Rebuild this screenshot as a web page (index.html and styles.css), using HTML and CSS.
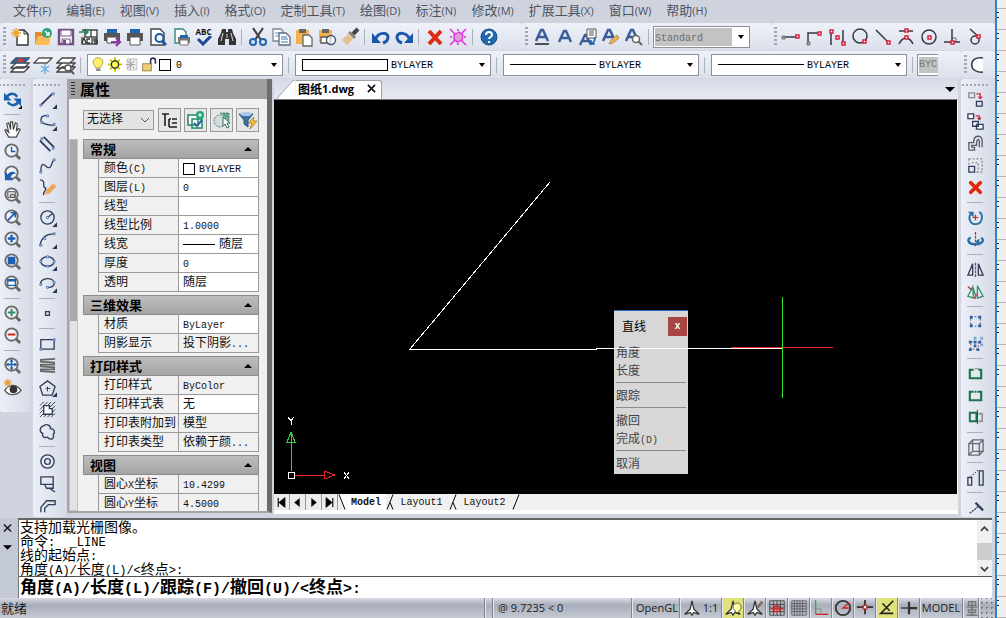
FILE: index.html
```
<!DOCTYPE html>
<html lang="zh-CN">
<head>
<meta charset="utf-8">
<title>图纸1.dwg</title>
<link rel="stylesheet" href="styles.css">
</head>
<body>
<svg class="defs" aria-hidden="true">
  <symbol id="mag" viewBox="0 0 20 20"><path d="M13 13l5 5" stroke="#666" stroke-width="3"/><circle cx="9" cy="9" r="6.5" fill="#eef2f8" stroke="#6b6b6b" stroke-width="2"/></symbol>
  <symbol id="tri" viewBox="0 0 20 20"><path d="M20 16v4h-4z" fill="#111"/></symbol>
  <symbol id="compass" viewBox="0 0 20 20"><path d="M10 2l2 9 6 6-6-2-2 3-2-3-6 2 6-6z" fill="#fff" stroke="#333" stroke-width="1.4"/></symbol>
  <symbol id="layers" viewBox="0 0 20 20"><path d="M6 12h13l-5 5H1zM6 8h13l-5 5H1zM6 3h13l-5 5H1z" fill="#fff" stroke="#444" stroke-width="1.3"/></symbol>
</svg>
<div class="app">
  <nav class="menubar">
    <button>文件<span>(F)</span></button><button>编辑<span>(E)</span></button><button>视图<span>(V)</span></button><button>插入<span>(I)</span></button><button>格式<span>(O)</span></button><button>定制工具<span>(T)</span></button><button>绘图<span>(D)</span></button><button>标注<span>(N)</span></button><button>修改<span>(M)</span></button><button>扩展工具<span>(X)</span></button><button>窗口<span>(W)</span></button><button>帮助<span>(H)</span></button>
  </nav>

  <div class="toolrow">
    <div class="toolbar std">
      <i class="grip"></i>
      <button aria-label="新建"><svg viewBox="0 0 20 20"><path d="M8 3h6l4 4v11H7V9" fill="#fff" stroke="#333" stroke-width="1.4"/><path d="M14 3v4h4" fill="none" stroke="#333"/><path d="M6 1v10M1 6h10M2.500 2.500l7 7M9.500 2.500l-7 7" stroke="#f0a020" stroke-width="1.4"/></svg></button>
      <button aria-label="打开"><svg viewBox="0 0 20 20"><path d="M2 5h6l2 2h6v3H5l-3 8z" fill="#e08a2a"/><path d="M5 9h13l-2 9H2z" fill="#fdbb55"/><circle cx="14" cy="6" r="5" fill="#2ba37c"/><path d="M12 4l4 4M16 5v3h-3" stroke="#fff" stroke-width="1.4" fill="none"/></svg></button>
      <button aria-label="保存"><svg viewBox="0 0 20 20"><path d="M3 3h14v14H3z" fill="#fff" stroke="#755087" stroke-width="2.4"/><path d="M5 3h10v6H5zM6 12h8v5H6z" fill="#fff" stroke="#755087"/><path d="M7 13h3v4H7z" fill="#755087"/></svg></button>
      <button aria-label="ACIS"><svg viewBox="0 0 20 20"><path d="M3 3h15v7H6V2M12 3v7M3 10v7h15v-7" fill="#fff" stroke="#444" stroke-width="1.4"/><path d="M0 5h9M6 2l3 3-3 3" fill="none" stroke="#1c8a5c" stroke-width="1.6"/><path d="M3 16l2-5 2 5M11 12H8v4h3M13 11v6M18 12h-3v2h3v2h-3" fill="none" stroke="#333" stroke-width="1.3"/></svg></button>
      <button aria-label="批量打印"><svg viewBox="0 0 20 20"><path d="M5 2h10v4H5z" fill="#1e66ad"/><path d="M2 6h16v8H2z" fill="#555"/><path d="M5 10h10v6H5z" fill="#fff" stroke="#555"/><path d="M9 15h8M14 11l4 4-4 4" stroke="#8d3aa0" stroke-width="2.2" fill="none"/></svg></button>
      <button aria-label="打印"><svg viewBox="0 0 20 20"><path d="M5 2h10v4H5z" fill="#1e66ad"/><path d="M2 6h16v8H2z" fill="#555"/><path d="M5 10h10v8H5z" fill="#fff" stroke="#555"/></svg></button>
      <button aria-label="预览"><svg viewBox="0 0 20 20"><path d="M3 2h9l4 4v12H3z" fill="#fff" stroke="#444" stroke-width="1.4"/><path d="M14 14l4 4" stroke="#1c57a0" stroke-width="3"/><circle cx="11.500" cy="11" r="4" fill="#eaf3ff" stroke="#1c57a0" stroke-width="2"/></svg></button>
      <button aria-label="发布"><svg viewBox="0 0 20 20"><path d="M4 2h8l3 3v11H4z" fill="#fff" stroke="#3b8775" stroke-width="1.4"/><path d="M7 10h12v6H7z" fill="#777"/><path d="M9 8h8v3H9z" fill="#1e66ad"/><path d="M9 13h8v5H9z" fill="#fff" stroke="#777"/></svg></button>
      <button aria-label="拼写检查" class="abc"><span>ABC</span><svg viewBox="0 0 20 10"><path d="M4 3l5 5 8-8" fill="none" stroke="#1b4898" stroke-width="3"/></svg></button>
      <button aria-label="查找"><svg viewBox="0 0 20 20"><path d="M5 2h4v3h2V2h4l1 4 3 6v6h-7v-6H8v6H1v-6l3-6z" fill="#333"/><path d="M6 6l-2 8M14 6l2 8M10 7v4" stroke="#ddd"/></svg></button>
      <i class="sep"></i>
      <button aria-label="剪切"><svg viewBox="0 0 20 20"><path d="M5 1l8 12M15 1L7 13" stroke="#444" stroke-width="2.200"/><circle cx="5" cy="15" r="3" fill="none" stroke="#1e66ad" stroke-width="2"/><circle cx="15" cy="15" r="3" fill="none" stroke="#1e66ad" stroke-width="2"/></svg></button>
      <button aria-label="复制"><svg viewBox="0 0 20 20"><path d="M2 2h8l2 2v10H2z" fill="#fff" stroke="#7a8793" stroke-width="1.300"/><path d="M4 6h5M4 9h5" stroke="#5a92c6"/><path d="M8 6h7l4 4v8H8z" fill="#fff" stroke="#5b6b7a" stroke-width="1.300"/><path d="M10 10h6M10 12h7M10 15h7" stroke="#3879b8"/></svg></button>
      <button aria-label="粘贴"><svg viewBox="0 0 20 20"><path d="M2 3h13v14H2z" fill="#f5b24c"/><path d="M5 2h7v4H5z" fill="#666"/><path d="M9 8h6l3 3v8H9z" fill="#fff" stroke="#666" stroke-width="1.300"/></svg></button>
      <button aria-label="粘贴为块"><svg viewBox="0 0 20 20"><path d="M2 3h13v12H2z" fill="#f5b24c"/><path d="M5 2h7v4H5z" fill="#666"/><path d="M4 10h9v6H4z" fill="#fff" stroke="#555" stroke-width="1.300"/><circle cx="14" cy="13" r="4.500" fill="#fff" fill-opacity=".7" stroke="#3b4d78" stroke-width="1.300"/></svg></button>
      <button aria-label="格式刷"><svg viewBox="0 0 20 20"><path d="M2 13l6-6 5 5-6 6z" fill="#e5c08a"/><path d="M8 6l6 6 2-2-6-6z" fill="#8b8175"/><path d="M13 7l5-5" stroke="#444" stroke-width="4"/></svg></button>
      <i class="sep"></i>
      <button aria-label="撤销"><svg viewBox="0 0 20 20"><path d="M5 11c3-6 12-6 12-1 0 3-2 5-5 6" fill="none" stroke="#1b57a8" stroke-width="3"/><path d="M1 6v10h9z" fill="#1b57a8"/></svg></button>
      <button aria-label="重做"><svg viewBox="0 0 20 20"><path d="M15 11C12 5 3 5 3 10c0 3 2 5 5 6" fill="none" stroke="#1b57a8" stroke-width="3"/><path d="M19 6v10h-9z" fill="#1b57a8"/></svg></button>
      <i class="sep"></i>
      <button aria-label="删除"><svg viewBox="0 0 20 20"><path d="M4 4l12 13M16 4L4 17" stroke="#dc2b12" stroke-width="4"/></svg></button>
      <button aria-label="清理"><svg viewBox="0 0 20 20"><path d="M6 8l5-3 4 3-1 5-5 2-3-3z" fill="#d8a0d5" stroke="#e82adf" stroke-width="1.300"/><path d="M2 2l5 5M18 2l-5 5M2 18l5-5M18 18l-5-5M10 2v2M10 16v2M2 10h2M16 10h2" stroke="#e82adf" stroke-width="1.500"/></svg></button>
      <i class="sep"></i>
      <button aria-label="帮助"><svg viewBox="0 0 20 20"><circle cx="10" cy="10" r="8" fill="#2469ad" stroke="#17508c"/><path d="M7 8c0-4 6-4 6 0 0 2-3 2-3 4M10 14v2" fill="none" stroke="#fff" stroke-width="2"/></svg></button>
    </div>
    <div class="toolbar text">
      <i class="grip"></i>
      <button aria-label="多行文字"><svg viewBox="0 0 20 20"><path d="M4 14L9 3h2l5 11M6 10h8" fill="none" stroke="#3c5c99" stroke-width="2.500"/><path d="M3 17h14" stroke="#111" stroke-width="1.400"/></svg></button>
      <button aria-label="文字"><svg viewBox="0 0 20 20"><path d="M4 15L9 4h2l5 11M6 11h8" fill="none" stroke="#3c5c99" stroke-width="2.500"/></svg></button>
      <button aria-label="文字样式"><svg viewBox="0 0 20 20"><path d="M2 18L7 8h1l5 10M4 14h7" fill="none" stroke="#3c5c99" stroke-width="2.300"/><path d="M9 2h9v9H9z" fill="#fff" stroke="#555"/><path d="M11 4h5M11 6h5M11 8h5" stroke="#555"/><path d="M17 10c0 4-1 5-4 7M13 13v4h4" fill="none" stroke="#1e66ad" stroke-width="1.600"/></svg></button>
      <button aria-label="编辑文字"><svg viewBox="0 0 20 20"><path d="M2 14L7 3h2l5 11M4 10h8" fill="none" stroke="#3c5c99" stroke-width="2.500"/><path d="M8 17l2-4 6-5 2 3-6 5z" fill="#efb35d" stroke="#b98b4c"/></svg></button>
      <button aria-label="查找文字"><svg viewBox="0 0 20 20"><path d="M2 14L7 3h2l5 11M4 10h8" fill="none" stroke="#3c5c99" stroke-width="2.500"/><path d="M14 14l4 4" stroke="#666" stroke-width="2"/><circle cx="12" cy="12" r="3.500" fill="#fff" stroke="#666" stroke-width="1.500"/></svg></button>
      <i class="sep"></i>
      <label class="combo style"><select aria-label="文字样式名"><option>Standard</option></select><svg class="arrow" viewBox="0 0 6 4"><path d="M0 0h6L3 4z"/></svg></label>
    </div>
    <div class="toolbar snap">
      <i class="grip"></i>
      <button aria-label="临时追踪"><svg class="ln" viewBox="0 0 20 20"><path d="M3 10h13"/><path class="g" d="M1 9h3v3H1z"/><path class="r" d="M15 8h3v3h-3z"/></svg></button>
      <button aria-label="捕捉自"><svg class="ln" viewBox="0 0 20 20"><path d="M4 15V6h10"/><path class="g" d="M3 15h3v3H3z"/><path class="r" d="M14 5h3v3h-3z"/></svg></button>
      <button aria-label="中点"><svg class="ln" viewBox="0 0 20 20"><path d="M4 5v13M16 3v13"/><path class="r" d="M3 3h3v3H3zM9 9h3v3H9zM15 15h3v3h-3z"/></svg></button>
      <button aria-label="象限点"><svg class="ln" viewBox="0 0 20 20"><circle cx="10" cy="9" r="7"/><path class="r" d="M13 13h3v3h-3z"/></svg></button>
      <button aria-label="端点"><svg class="ln" viewBox="0 0 20 20"><path d="M3 3l12 12"/><path class="r" d="M14 14h3v3h-3z"/></svg></button>
      <button aria-label="交点"><svg class="ln" viewBox="0 0 20 20"><path d="M3 4h14M3 17c4-8 10-8 14 0"/><path class="r" d="M9 2h3v3H9zM9 9h3v3H9z"/></svg></button>
      <button aria-label="圆心"><svg class="ln" viewBox="0 0 20 20"><circle cx="10" cy="10" r="7"/><path class="r" d="M9 9h3v3H9z"/></svg></button>
      <button aria-label="垂足"><svg class="ln" viewBox="0 0 20 20"><path d="M10 2v13M2 15h16"/><path d="M10 11h4v4" stroke-width=".7"/><path class="r" d="M9 14h3v3H9z"/></svg></button>
      <button aria-label="切点"><svg class="ln" viewBox="0 0 20 20"><circle cx="10" cy="13" r="4"/><path d="M5 2l9 8"/><path class="r" d="M12 8h3v3h-3z"/></svg></button>
    </div>
  </div>

  <div class="toolrow">
    <div class="toolbar props">
      <i class="grip"></i>
      <button aria-label="图层"><svg viewBox="0 0 20 20"><use href="#layers"/><path d="M6 3h13l-5 5H1z" fill="#34618d"/><path d="M8 4h5v3H8z" fill="#dc3535"/></svg></button>
      <button aria-label="冻结图层"><svg viewBox="0 0 20 20"><path d="M6 3h13l-5 5H1z" fill="#fff" stroke="#555" stroke-width="1.300"/><path d="M12 9v10M8 11l8 6M16 11l-8 6" stroke="#6db1ea" stroke-width="1.500"/></svg></button>
      <button aria-label="图层浏览"><svg viewBox="0 0 20 20"><use href="#layers"/><path d="M14 15l4 4" stroke="#555" stroke-width="2"/><circle cx="12" cy="13" r="3" fill="#fff" stroke="#555" stroke-width="1.500"/></svg></button>
      <i class="sep"></i>
      <label class="combo layer">
        <svg viewBox="0 0 20 20"><path d="M7 14c0-3-4-4-3-8 1-6 11-6 12 0 1 4-3 5-3 8z" fill="#fff26a" stroke="#a69429"/><path d="M7 15h6v3H8z" fill="#888"/></svg>
        <svg viewBox="0 0 20 20"><path d="M10 1v18M1 10h18M4 4l12 12M16 4L4 16" stroke="#c9c900" stroke-width="2.500"/><circle cx="10" cy="10" r="4.500" fill="#ff5" stroke="#222" stroke-width="1.500"/></svg>
        <svg viewBox="0 0 20 20"><path d="M4 3h12v14H4z" fill="#eee" stroke="#bbb"/><path d="M8 3v14M2 10h12M4 5l9 10M13 5L4 15" stroke="#aaa" stroke-width="1.300"/></svg>
        <svg viewBox="0 0 20 20"><path d="M2 9h11v9H2z" fill="#eccb77" stroke="#8c7439"/><path d="M12 9V5c0-4 6-4 6 0v4" fill="none" stroke="#2c3161" stroke-width="2"/></svg>
        <i class="swatch"></i>
        <select aria-label="当前图层"><option>0</option></select><svg class="arrow" viewBox="0 0 6 4"><path d="M0 0h6L3 4z"/></svg>
      </label>
      <i class="sep"></i>
      <label class="combo"><i class="colorbar"></i><select aria-label="颜色"><option>BYLAYER</option></select><svg class="arrow" viewBox="0 0 6 4"><path d="M0 0h6L3 4z"/></svg></label>
      <i class="sep"></i>
      <label class="combo"><i class="rule"></i><select aria-label="线型"><option>BYLAYER</option></select><svg class="arrow" viewBox="0 0 6 4"><path d="M0 0h6L3 4z"/></svg></label>
      <i class="sep"></i>
      <label class="combo"><i class="rule"></i><select aria-label="线宽"><option>BYLAYER</option></select><svg class="arrow" viewBox="0 0 6 4"><path d="M0 0h6L3 4z"/></svg></label>
      <i class="sep"></i>
      <span class="clipcombo"><span>BYC</span></span>
    </div>
    <div class="toolbar arcbar"><i class="grip"></i><button aria-label="圆弧"><svg class="ln" viewBox="0 0 20 20"><path d="M14 3C-1 0-1 19 14 17" fill="#fff"/></svg></button></div>
  </div>

  <main class="work">
    <div class="vbar view">
      <i class="hgrip"></i>
      <button aria-label="重生成"><svg viewBox="0 0 20 20"><path d="M15 7C11 2 5 4 4 8M5 13c4 5 10 3 11-1" fill="none" stroke="#1b5fae" stroke-width="2.600"/><path d="M1 3v8h8zM19 17V9h-8z" fill="#1b5fae"/><use href="#tri"/></svg></button>
      <i class="hsep"></i>
      <button aria-label="平移"><svg viewBox="0 0 20 20"><path d="M6 18l-4-7 1-1 3 3-2-9 2-1 2 7V2h2l1 8 2-7 2 1-1 8 2-3 2 1-4 8z" fill="#fff" stroke="#444" stroke-width="1.200"/></svg></button>
      <button aria-label="实时缩放"><svg viewBox="0 0 20 20"><use href="#mag"/><path d="M9 5v5h4" fill="none" stroke="#1b5fae" stroke-width="1.500"/></svg></button>
      <button aria-label="上一视图"><svg viewBox="0 0 20 20"><use href="#mag"/><path d="M2 8v9h9l-3-3c1-3 3-4 6-4-3-3-7-2-9 1z" fill="#1b5fae"/></svg></button>
      <button aria-label="窗口缩放"><svg viewBox="0 0 20 20"><use href="#mag"/><path d="M5 6h8v6H5zM8 9h4v3H8z" fill="#ddd" stroke="#555"/></svg></button>
      <button aria-label="动态缩放"><svg viewBox="0 0 20 20"><use href="#mag"/><path d="M5 13l7-7M8 5h5v5" fill="none" stroke="#1b5fae" stroke-width="1.800"/></svg></button>
      <button aria-label="中心缩放"><svg viewBox="0 0 20 20"><use href="#mag"/><path d="M9 5v8M5 9h8" stroke="#1b5fae" stroke-width="2.500"/></svg></button>
      <button aria-label="对象缩放"><svg viewBox="0 0 20 20"><use href="#mag"/><path d="M5 5h8v8H5z" fill="#1b5fae"/></svg></button>
      <button aria-label="全部缩放"><svg viewBox="0 0 20 20"><use href="#mag"/><path d="M5 6h8v6H5z" fill="#fff" stroke="#1b5fae" stroke-width="1.300"/><path d="M5 6h8v2H5z" fill="#1b5fae"/></svg></button>
      <i class="hsep"></i>
      <button aria-label="放大"><svg viewBox="0 0 20 20"><use href="#mag"/><path d="M9 5v8M5 9h8" stroke="#2c9366" stroke-width="2"/></svg></button>
      <button aria-label="缩小"><svg viewBox="0 0 20 20"><use href="#mag"/><path d="M5 9h8" stroke="#d02a1c" stroke-width="2"/></svg></button>
      <i class="hsep"></i>
      <button aria-label="范围缩放"><svg viewBox="0 0 20 20"><use href="#mag"/><path d="M9 4v10M4 9h10" stroke="#1b5fae" stroke-width="1.500"/><path d="M9 3l2 3H7zM9 15l2-3H7zM3 9l3-2v4zM15 9l-3-2v4z" fill="#1b5fae"/></svg></button>
      <button aria-label="视图可见"><svg viewBox="0 0 20 20"><path d="M2 13c4-7 12-7 17 0-5 6-13 6-17 0z" fill="#fff" stroke="#555" stroke-width="1.500"/><circle cx="11" cy="12" r="4" fill="#333"/><path d="M5 1v9M1 5h8M2 2l6 6M8 2L2 8" stroke="#eea034" stroke-width="1.400"/></svg></button>
    </div>
    <div class="vbar draw">
      <i class="hgrip"></i>
      <button aria-label="直线"><svg class="dr" viewBox="0 0 20 20"><path d="M3 16L15 4" stroke-width="1.800"/><path class="n" d="M2 15h2v2H2zM15 3h2v2h-2z"/><use href="#tri"/></svg></button>
      <button aria-label="多段线"><svg class="dr" viewBox="0 0 20 20"><path d="M9 4C3 3 1 10 6 12c4 2 6 2 11 2"/><path class="n" d="M9 3h2v2H9zM3 10h2v2H3zM16 12h2v2h-2z"/><use href="#tri"/></svg></button>
      <button aria-label="双线"><svg class="dr" viewBox="0 0 20 20"><path d="M2 7l11 11M6 3l11 11" stroke-width="2"/><path class="n" d="M3 4h2v2H3zM15 14h2v2h-2z"/></svg></button>
      <button aria-label="样条"><svg class="dr" viewBox="0 0 20 20"><path d="M3 17C3 4 7 10 10 12c5 2 4-7 7-8"/><path class="n" d="M2 16h2v2H2zM16 3h2v2h-2z"/></svg></button>
      <button aria-label="徒手画"><svg class="dr" viewBox="0 0 20 20"><path d="M2 2c7 0 2 7 5 8 4 1-3 6-1 8"/><path d="M8 17l1-4 7-7 3 3-7 7z" fill="#eba757" stroke="#eeb36b" stroke-width="1"/></svg></button>
      <i class="hsep"></i>
      <button aria-label="圆"><svg class="dr" viewBox="0 0 20 20"><circle cx="10" cy="10" r="7"/><path d="M10 10l5-4"/><path class="n" d="M9 9h2v2H9z"/><use href="#tri"/></svg></button>
      <button aria-label="圆弧"><svg class="dr" viewBox="0 0 20 20"><path d="M2 17C3 9 8 4 17 4"/><path class="n" d="M2 15h2v2H2zM6 8h2v2H6zM16 3h2v2h-2z"/><use href="#tri"/></svg></button>
      <button aria-label="椭圆"><svg class="dr" viewBox="0 0 20 20"><ellipse cx="10" cy="10" rx="7" ry="5"/><path class="n" d="M9 4h2v2H9zM2 9h2v2H2zM16 9h2v2h-2zM9 14h2v2H9z"/><use href="#tri"/></svg></button>
      <button aria-label="椭圆弧"><svg class="dr" viewBox="0 0 20 20"><path d="M3 11C1 3 18 3 17 10c0 3-2 4-6 4"/><path class="n" d="M2 10h2v2H2zM16 8h2v2h-2zM9 13h2v2H9z"/><use href="#tri"/></svg></button>
      <i class="hsep"></i>
      <button aria-label="点"><svg class="dr" viewBox="0 0 20 20"><path d="M8 8h4v4H8z"/></svg></button>
      <i class="hsep"></i>
      <button aria-label="矩形"><svg class="dr" viewBox="0 0 20 20"><path d="M3 6h14v10H3z"/><path class="n" d="M2 15h2v2H2zM16 5h2v2h-2z"/></svg></button>
      <button aria-label="螺旋"><svg class="dr" viewBox="0 0 20 20"><path d="M18 3L3 4v2l14 1v2L3 9v2l14 1v2L3 14v2l15 1" stroke="#666" stroke-width="1.800"/></svg></button>
      <button aria-label="多边形"><svg class="dr" viewBox="0 0 20 20"><path d="M10 3l8 6-3 9H5L2 9z"/><path d="M10 9v5M8 11h5" stroke-width="1"/><use href="#tri"/></svg></button>
      <button aria-label="图案填充"><svg class="dr" viewBox="0 0 20 20"><path d="M2 6l4-4M2 10l8-8M2 14l12-12M2 18L18 2M6 18L18 6M10 18l8-8M14 18l4-4" stroke-width="1"/><path d="M6 6h6v3h3v6H6z" fill="#fff"/></svg></button>
      <button aria-label="修订云线"><svg class="dr" viewBox="0 0 20 20"><path d="M6 4c3-3 8 0 7 3 5 0 5 5 3 6 2 6-4 6-6 3-4 1-6-1-5-4-5-2-2-8 1-8z"/></svg></button>
      <i class="hsep"></i>
      <button aria-label="圆环"><svg class="dr" viewBox="0 0 20 20"><circle cx="10" cy="10" r="7"/><circle cx="10" cy="10" r="3"/></svg></button>
      <button aria-label="区域覆盖"><svg class="dr" viewBox="0 0 20 20"><path d="M3 3h13v8H3zM7 11l2 4h7v-4M12 15l6 4"/></svg></button>
      <button aria-label="多线"><svg class="dr" viewBox="0 0 20 20"><path d="M3 17v-5l6-7h9v4h-7l-4 4v4"/></svg></button>
    </div>

    <aside class="panel">
      <h2><i></i>属性</h2>
      <div class="pick">
        <label class="psel"><select aria-label="选择对象"><option>无选择</option></select><svg viewBox="0 0 10 6"><path d="M1 1l4 4 4-4" fill="none" stroke="#555"/></svg></label>
        <button aria-label="分类"><svg viewBox="0 0 20 20"><path d="M2 4h7M5 4v12M9 9v8M9 9h2M12 9h5M12 13h5M9 17h8" fill="none" stroke="#222" stroke-width="1.600"/></svg></button>
        <button aria-label="加选"><svg viewBox="0 0 20 20"><path d="M2 5h10v10H2zM6 9h10v9H6z" fill="#fff" stroke="#1c8a5c" stroke-width="1.500"/><path d="M8 13l3 3 5-6" fill="none" stroke="#2b66a2" stroke-width="2"/><circle cx="14" cy="5" r="4" fill="#26a276"/><path d="M14 3v4M12 5h4" stroke="#fff"/></svg></button>
        <button aria-label="快速选择"><svg viewBox="0 0 20 20"><circle cx="8" cy="11" r="6" fill="#d5dadd" stroke="#507080" stroke-dasharray="2 1"/><path d="M8 3h9v8" fill="#65a889" stroke="#3d8a69" stroke-dasharray="2 1"/><path d="M11 7v9l2-2 2 4 2-1-2-4h3z" fill="#fff" stroke="#2d6e58"/></svg></button>
        <button aria-label="筛选"><svg viewBox="0 0 20 20"><path d="M1 4h14l-5 6v7l-4-3v-4z" fill="#3972a4" stroke="#285376"/><ellipse cx="8" cy="4" rx="6" ry="2" fill="#a9c9e2"/><path d="M16 7l-6 6h4l-2 6 7-8h-4z" fill="#ffc23c" stroke="#9a6f25" stroke-width=".700"/></svg></button>
      </div>
      <div class="scroll">
        <div class="track"><i></i></div>
        <div class="groups">
          <section><h3>常规<svg viewBox="0 0 8 4"><path d="M0 4h8L4 0z"/></svg></h3>
            <table>
              <tr><th>颜色<b>(C)</b></th><td><i class="swatch"></i><b>BYLAYER</b></td></tr>
              <tr><th>图层<b>(L)</b></th><td><b>0</b></td></tr>
              <tr><th>线型</th><td></td></tr>
              <tr><th>线型比例</th><td><b>1.0000</b></td></tr>
              <tr><th>线宽</th><td><i class="short"></i>随层</td></tr>
              <tr><th>厚度</th><td><b>0</b></td></tr>
              <tr><th>透明</th><td>随层</td></tr>
            </table></section>
          <section><h3>三维效果<svg viewBox="0 0 8 4"><path d="M0 4h8L4 0z"/></svg></h3>
            <table>
              <tr><th>材质</th><td><b>ByLayer</b></td></tr>
              <tr><th>阴影显示</th><td class="ro">投下阴影<b>...</b></td></tr>
            </table></section>
          <section><h3>打印样式<svg viewBox="0 0 8 4"><path d="M0 4h8L4 0z"/></svg></h3>
            <table>
              <tr><th>打印样式</th><td class="ro"><b>ByColor</b></td></tr>
              <tr><th>打印样式表</th><td>无</td></tr>
              <tr><th>打印表附加到</th><td class="ro">模型</td></tr>
              <tr><th>打印表类型</th><td class="ro">依赖于颜<b>...</b></td></tr>
            </table></section>
          <section><h3>视图<svg viewBox="0 0 8 4"><path d="M0 4h8L4 0z"/></svg></h3>
            <table>
              <tr><th>圆心<b>X</b>坐标</th><td class="ro"><b>10.4299</b></td></tr>
              <tr><th>圆心<b>Y</b>坐标</th><td class="ro"><b>4.5000</b></td></tr>
            </table></section>
        </div>
      </div>
    </aside>

    <section class="doc">
      <div class="tabs">
        <svg class="slope" viewBox="0 0 20 20"><path d="M0 20L16 2q2-2 4-2v20z" fill="#fff"/><path d="M0 20L16 2q2-2 4-2" fill="none" stroke="#9aa0ac"/></svg>
        <div class="tab">图纸<span>1.dwg</span><button aria-label="关闭"><svg viewBox="0 0 10 10"><path d="M1 1l8 8M9 1L1 9" stroke="#111" stroke-width="1.800"/></svg></button></div>
        <button class="more" aria-label="文档列表"><svg viewBox="0 0 10 5"><path d="M0 0h10L5 5z"/></svg></button>
      </div>
      <div class="canvas">
        <div class="popup">
          <header><span>直线</span><button aria-label="关闭菜单">x</button></header>
          <button>角度</button><button>长度</button><hr>
          <button>跟踪</button><hr>
          <button>撤回</button><button>完成<b>(D)</b></button><hr>
          <button>取消</button>
        </div>
        <svg class="drawing" shape-rendering="crispEdges">
          <path d="M276 82L136 249H322V248H508" fill="none" stroke="#fff"/>
          <path d="M457 247H559" stroke="#f02020"/><path d="M508 197V298" stroke="#2fe02f"/>
          <path d="M17 371V332M13 342h8l-4-10z" fill="none" stroke="#38d038"/>
          <path d="M21 375H50M50 371v8l11-4z" fill="none" stroke="#f02020"/>
          <path d="M14 372h6v6h-6zM14 317l3 4 3-4M17 321v4M70 372l5 7M75 372l-5 7" fill="none" stroke="#fff"/>
        </svg>
      </div>
      <div class="sheets">
        <button class="nav" aria-label="首页"><svg viewBox="0 0 10 10"><path d="M2 1v8M8 1v8L3 5z" stroke="#000"/></svg></button>
        <button class="nav" aria-label="上页"><svg viewBox="0 0 10 10"><path d="M7 1v8L2 5z"/></svg></button>
        <button class="nav" aria-label="下页"><svg viewBox="0 0 10 10"><path d="M3 1v8l5-4z"/></svg></button>
        <button class="nav" aria-label="末页"><svg viewBox="0 0 10 10"><path d="M8 1v8M2 1v8l5-4z" stroke="#000"/></svg></button>
        <svg class="edge" viewBox="0 0 8 15"><path d="M0 0h8v15H6z" fill="#fff"/><path d="M1 0l6 15" stroke="#000"/></svg>
        <button class="sheet on">Model</button>
        <svg class="edge" viewBox="0 0 8 15"><path d="M1 15L7 0M4 8l3 7" stroke="#000"/></svg>
        <button class="sheet">Layout1</button>
        <svg class="edge" viewBox="0 0 8 15"><path d="M1 15L7 0M4 8l3 7" stroke="#000"/></svg>
        <button class="sheet">Layout2</button>
        <svg class="edge" viewBox="0 0 8 15"><path d="M1 15L7 0" stroke="#000"/></svg>
      </div>
    </section>

    <div class="vbar modify">
      <i class="hgrip"></i>
      <button aria-label="复制对象"><svg class="dr" viewBox="0 0 20 20"><path d="M3 3h6v5H3z" stroke="#889"/><path d="M11 12h6v5h-6z"/><path d="M11 4h4v5M13 7l2 2 2-2" stroke="#c8283c" stroke-width="1.300"/></svg></button>
      <button aria-label="多重复制"><svg class="dr" viewBox="0 0 20 20"><path d="M2 2h6v5H2zM7 10h6v5H7zM11 13h7v5h-7z" fill="#fff"/><path d="M10 4h4v4M12 6l2 2 2-2" stroke="#c8283c" stroke-width="1.300"/></svg></button>
      <button aria-label="偏移"><svg class="dr" viewBox="0 0 20 20"><path d="M3 17V9h5C8 0 17 1 17 7v7M6 14v-2h5c0-8 3-7 3-4v6M3 17h6v-3H6" stroke="#555c66"/></svg></button>
      <button aria-label="缩放"><svg class="dr" viewBox="0 0 20 20"><path d="M3 3h14v14M3 3v6M6 7h7v10M17 17h-7" stroke="#888" stroke-dasharray="2 2"/><path d="M3 11h6v6H3z"/></svg></button>
      <button aria-label="删除对象"><svg viewBox="0 0 20 20"><path d="M5 5l10 10M15 5L5 15" stroke="#e2280f" stroke-width="4" stroke-linecap="round"/></svg></button>
      <i class="hsep"></i>
      <button aria-label="旋转"><svg viewBox="0 0 20 20"><path d="M14 4c5 4 3 13-4 13-6 0-8-7-5-11" fill="none" stroke="#2871a8" stroke-width="2"/><path d="M2 4h6v6z" fill="#2871a8"/><path d="M10 7v6M7 10h6" stroke="#d32323" stroke-width="1.300"/></svg></button>
      <button aria-label="三维旋转"><svg viewBox="0 0 20 20"><path d="M5 8c-5 2-2 7 4 7 8 0 11-4 7-7" fill="none" stroke="#2871a8" stroke-width="2.500"/><path d="M10 12l4-3v8z" fill="#2871a8"/><path d="M10 2v16" stroke="#d32323" stroke-width="1.300" stroke-dasharray="3 1"/></svg></button>
      <i class="hsep"></i>
      <button aria-label="镜像"><svg class="dr" viewBox="0 0 20 20"><path d="M7 4v12H2zM13 4v12h5z"/><path d="M10 3v15" stroke="#d32323" stroke-dasharray="3 1"/></svg></button>
      <button aria-label="三维镜像"><svg class="dr" viewBox="0 0 20 20"><path d="M7 5L2 15l6 2zM12 4l6 11-6 2zM12 4v13M7 5l3 9" stroke="#35946a"/><path d="M2 5l4 3M9 18l2-5" stroke="#d32323"/></svg></button>
      <i class="hsep"></i>
      <button aria-label="阵列"><svg viewBox="0 0 20 20"><path d="M5 5h10v10H5z" fill="none" stroke="#555" stroke-dasharray="2 2"/><path d="M4 4h3v3H4zM13 4h3v3h-3zM4 13h3v3H4zM13 13h3v3h-3z" fill="#2462ad"/></svg></button>
      <button aria-label="三维阵列"><svg viewBox="0 0 20 20"><path d="M8 3h3v3H8zM15 3h3v3h-3zM15 10h3v3h-3z" fill="#80a9da"/><path d="M5 8h8v8H5z" fill="none" stroke="#a44" stroke-dasharray="2 2"/><path d="M3 7h3v3H3zM8 7h3v3H8zM13 7h3v3h-3zM3 15h3v3H3zM11 15h3v3h-3zM8 11h3v3H8z" fill="#2462ad"/></svg></button>
      <i class="hsep"></i>
      <button aria-label="打断"><svg viewBox="0 0 20 20"><path d="M8 6H4v9h12V6h-3" fill="none" stroke="#16754b" stroke-width="2.200"/><path d="M9 5h5" stroke="#888"/></svg></button>
      <button aria-label="打断于点"><svg viewBox="0 0 20 20"><path d="M8 6H4v9h12V6h-4M9 6h2" fill="none" stroke="#16754b" stroke-width="2.200"/></svg></button>
      <button aria-label="修剪"><svg viewBox="0 0 20 20"><path d="M11 5H4v9h7z" fill="none" stroke="#16754b" stroke-width="2"/><path d="M13 6h4v8h-4" fill="none" stroke="#999" stroke-width="2"/><path d="M12 2v15" stroke="#333"/></svg></button>
      <i class="hsep"></i>
      <button aria-label="长方体"><svg class="dr" viewBox="0 0 20 20"><path d="M3 6h11v12H3zM7 2h11v12H7zM3 6l4-4M14 6l4-4M14 18l4-4M3 18l4-4" stroke="#666b74"/></svg></button>
      <i class="hsep"></i>
      <button aria-label="拉长"><svg class="dr" viewBox="0 0 20 20"><path d="M2 10h4v8H2zM14 3h4v15h-4z"/><path d="M5 9l8-7" stroke-dasharray="1 2"/></svg></button>
      <i class="hsep"></i>
      <button aria-label="延伸"><svg class="dr" viewBox="0 0 20 20"><path d="M10 5l8 8" stroke-width="2.400"/><path d="M4 16l9-7" stroke-dasharray="2 1"/></svg></button>
    </div>
  </main>

  <section class="command">
    <div class="cmdside"><button aria-label="关闭命令行"><svg viewBox="0 0 10 10"><path d="M1 1l8 8M9 1L1 9" stroke="#111" stroke-width="1.600"/></svg></button><button aria-label="命令行菜单"><svg viewBox="0 0 10 10"><path d="M0 3h10L5 8z"/></svg></button></div>
    <div class="cmdbody">
      <div class="log">
        <div class="lines"><p>支持加载光栅图像。</p><p>命令<b>:&nbsp; _LINE</b></p><p>线的起始点<b>:</b></p><p>角度<b>(A)/</b>长度<b>(L)/&lt;</b>终点<b>&gt;:</b></p></div>
        <div class="vscroll"><svg viewBox="0 0 10 6"><path d="M1 5l4-4 4 4"/></svg><i></i><svg viewBox="0 0 10 6"><path d="M1 1l4 4 4-4"/></svg></div>
      </div>
      <div class="prompt">角度<b>(A)/</b>长度<b>(L)/</b>跟踪<b>(F)/</b>撤回<b>(U)/&lt;</b>终点<b>&gt;:</b></div>
    </div>
  </section>

  <footer class="status">
    <span class="ready">就绪</span>
    <span class="gap"></span>
    <span class="coord">@ 9.7235 &lt; 0</span>
    <span class="gl">OpenGL</span>
    <button class="scale"><svg viewBox="0 0 20 20"><use href="#compass"/></svg>1:1</button>
    <button class="lit" aria-label="注释可见"><svg viewBox="0 0 20 20"><use href="#compass"/><path d="M10 9c0-6 9-6 9 0 0 3-2 3-3 6h-3c0-3-3-3-3-6z" fill="#ffffa0" stroke="#554"/></svg></button>
    <button aria-label="自动注释"><svg viewBox="0 0 20 20"><use href="#compass"/><path d="M12 9l5-7 2 2-5 6z" fill="#7c6b51"/></svg></button>
    <button aria-label="捕捉"><svg viewBox="0 0 20 20"><path d="M2 2h16v16H2zM6 2v16M10 2v16M14 2v16M2 6h16M2 10h16M2 14h16" fill="none" stroke="#444"/><path d="M3 11h14M7 8h6v6H7z" fill="none" stroke="#e02020" stroke-width="1.500"/></svg></button>
    <button aria-label="栅格"><svg viewBox="0 0 20 20"><path d="M2 2h16v16H2zM5 2v16M8 2v16M11 2v16M14 2v16M2 5h16M2 8h16M2 11h16M2 14h16" fill="none" stroke="#555" stroke-width=".900"/></svg></button>
    <button aria-label="正交"><svg viewBox="0 0 20 20"><path d="M4 1v16" stroke="#35a853" stroke-width="1.500"/><path d="M4 17h14" stroke="#d02828" stroke-width="1.500"/><path d="M4 11h6v6" fill="none" stroke="#888"/></svg></button>
    <button aria-label="极轴"><svg viewBox="0 0 20 20"><circle cx="10" cy="10" r="8" fill="none" stroke="#333" stroke-width="2"/><path d="M18 10h-8l7-6" fill="none" stroke="#d02828" stroke-width="1.500"/></svg></button>
    <button aria-label="对象捕捉"><svg viewBox="0 0 20 20"><path d="M1 9h18M10 1v16" stroke="#333" stroke-width="2"/><path d="M8 7h4v4H8z" fill="#fff" stroke="#d02828" stroke-width="1.500"/></svg></button>
    <button class="lit" aria-label="对象追踪"><svg viewBox="0 0 20 20"><path d="M17 2L3 16h14M5 5l8 8" fill="none" stroke="#222" stroke-width="1.800"/></svg></button>
    <button aria-label="线宽显示"><svg viewBox="0 0 20 20"><path d="M1 10h9" stroke="#333" stroke-width="1.500"/><path d="M10 10h9M10 3v14" stroke="#333" stroke-width="2.500"/></svg></button>
    <button class="model">MODEL</button>
    <button class="off" aria-label="数字化仪"><svg viewBox="0 0 20 20"><path d="M6 3h8v4H6zM4 9h12M6 12h8v3H6zM4 18h12M10 2v16" fill="none" stroke="#777" stroke-width="1.500"/></svg></button>
    <i class="resize"></i>
  </footer>
</div>
<div class="behind"></div>
</body>
</html>
```
FILE: styles.css
```
* { box-sizing: border-box; }
body {
  margin: 0; height: 100vh; display: flex; overflow: hidden;
  background: #d0d4df; color: #111;
  font: 12px/18px "Liberation Mono", "Noto Sans CJK SC", monospace;
}
.defs { position: absolute; width: 0; height: 0; }
button { border: 0; padding: 0; background: none; font: inherit; color: inherit; }
select { appearance: none; border: 0; padding: 0; background: none; font: inherit; color: inherit; flex: 1; min-width: 0; }
svg { display: block; flex: none; }
b { font: 10px/1px "Liberation Mono", monospace; }
.app { flex: 1; min-width: 0; display: flex; flex-direction: column; }
.behind {
  width: 11px; border-left: 2px solid #2c82cf;
  background:
    repeating-linear-gradient(#0000 0 12px, #223 12px 13px, #0000 13px 17px, #223 17px 18px, #0000 18px 21px) left / 2px 100% no-repeat,
    repeating-linear-gradient(#f1efec 0 8px, #bdb5ab 8px 9px, #f1efec 9px 21px);
}

.menubar { height: 23px; padding: 0 13px; display: flex; gap: 15px; align-items: flex-start; background: #ced3de; color: #4e5360; }
.menubar button { font: 13px/20px "Noto Sans CJK SC", sans-serif; white-space: nowrap; }
.menubar span { font: 11px/18px "Open Sans", sans-serif; }

.toolrow { display: flex; height: 28px; justify-content: space-between; background: #d3d8e3; }
.toolbar { display: flex; align-items: center; background: linear-gradient(#eef1f8, #dbe0eb); border-radius: 3px; height: 27px; padding-right: 9px; }
.toolbar button { width: 23px; height: 24px; display: grid; place-items: center; flex: none; }
.toolbar button svg { width: 20px; height: 20px; }
.grip { flex: none; width: 3px; height: 20px; margin: 0 2px 0 3px; background: repeating-linear-gradient(#a0a6b4 0 2px, #0000 2px 4px); }
.std { flex: 1; }
.text { width: 249px; }
.snap { width: 224px; padding: 0; }
.sep { flex: none; width: 8px; height: 16px; background: linear-gradient(#aab0bd, #aab0bd) 3px 0 / 1px 100% no-repeat; }
.toolbar .abc { align-content: center; }
.abc span { font: bold 8px/9px "Open Sans", sans-serif; }
.toolbar .abc svg { width: 20px; height: 10px; }
.ln { fill: none; stroke: #333b48; stroke-width: 1.5; }
.ln .r { fill: #fff; stroke: #d8203c; }
.ln .g { fill: #999; stroke: #777; stroke-width: 1; }
.combo {
  display: flex; align-items: center; flex: 0 1 196px; height: 22px; margin: 0 2px; padding: 0 4px 0 6px;
  border: 1px solid #8c9099; background: #fff; font-size: 10px; color: #000; gap: 3px; min-width: 0;
}
.combo select { height: 20px; padding-top: 2px; }
.combo svg { width: 16px; height: 17px; }
.combo .arrow { width: 6px; height: 4px; margin-right: 1px; }
.combo.style { flex-basis: 97px; padding: 0 4px 0 1px; margin: 0; color: #6c6c6c; gap: 6px; }
.combo.style select { background: #c3c3c3; height: 18px; }
.combo.layer { gap: 1px; padding-left: 2px; }
.swatch { width: 12px; height: 12px; border: 1px solid #000; background: #fff; flex: none; }
.layer .swatch { margin: 0 4px 0 1px; }
.colorbar { width: 86px; height: 12px; border: 1px solid #000; flex: none; }
.rule { width: 86px; height: 1px; background: #000; flex: none; }
.clipcombo { flex: none; width: 21px; height: 22px; border: 1px solid #8c9099; border-right: 0; padding: 2px 0 0 1px; background: #fff; font: 10px/16px "Liberation Mono", monospace; color: #777; }
.clipcombo span { display: block; background: #c3c3c3; }
.props { flex: 1; }
.arcbar { width: 34px; padding: 0; }
.toolbar.arcbar button { width: 18px; }

.work { flex: 1; min-height: 0; display: flex; padding-bottom: 1px; }
.vbar { flex: none; align-self: flex-start; display: flex; flex-direction: column; align-items: center; padding-top: 2px; border-radius: 3px; background: linear-gradient(90deg, #eceff7, #d6dbe7); max-height: 100%; overflow: hidden; }
.vbar button { width: 22px; height: 22px; display: grid; place-items: center; flex: none; }
.vbar svg { width: 19px; height: 19px; }
.hgrip { flex: none; width: 26px; height: 2px; margin: 3px 0 2px; background: repeating-linear-gradient(90deg, #a0a6b4 0 2px, #0000 2px 4px); }
.hsep { flex: none; width: 16px; height: 8px; background: linear-gradient(#aab0bd, #aab0bd) 0 4px / 100% 1px no-repeat; }
.view { width: 31px; padding-right: 7px; padding-bottom: 14px; }
.draw { width: 34px; margin-left: 2px; padding-right: 6px; align-self: stretch; }
.modify { width: 34px; padding-right: 6px; align-self: stretch; }
.dr { fill: none; stroke: #2f3d5c; stroke-width: 1.4; }
.dr .n { fill: #fff; stroke: #4a76b8; stroke-width: 1; }

.panel { flex: none; width: 205px; display: flex; flex-direction: column; background: #f0f0f0; border: 2px solid #a5a5a5; border-width: 0 5px 2px 2px; border-right-color: #6d6d6d; margin-bottom: 4px; }
.panel h2 { margin: 0; height: 20px; display: flex; align-items: center; gap: 5px; padding-left: 2px; background: #a0a0a0; font: bold 15px/20px "Noto Sans CJK SC", sans-serif; color: #000; }
.panel h2 i { width: 4px; height: 14px; background: repeating-linear-gradient(#333 0 1px, #0000 1px 3px); }
.pick { display: flex; gap: 3px; padding: 9px 0 7px 14px; align-items: center; }
.pick button { width: 23px; height: 24px; border: 1px solid #999; background: #e6e6e6; display: grid; place-items: center; }
.pick button svg { width: 20px; height: 20px; }
.psel { display: flex; align-items: center; width: 71px; height: 20px; border: 1px solid #999; background: #e3e3e3; padding: 0 3px; margin-right: 1px; font-size: 12px; }
.psel svg { width: 10px; height: 6px; }
.scroll { flex: 1; min-height: 0; display: flex; }
.track { width: 9px; background: #e3e3e3; border: 1px solid #c4c4c4; margin-right: 5px; flex: none; }
.track i { display: block; height: 49%; background: #a9a9a9; }
.groups { flex: none; width: 176px; overflow: hidden; display: flex; flex-direction: column; gap: 3px; }
.groups section { flex: none; }
.groups h3 { margin: 0; height: 20px; display: flex; align-items: center; justify-content: space-between; padding: 0 6px; border: 1px solid #8c8c8c; background: linear-gradient(#bdbdbd, #a4a4a4); font: bold 13px/18px "Noto Sans CJK SC", sans-serif; color: #000; }
.groups h3 svg { width: 8px; height: 4px; }
.groups table { width: 161px; margin-left: 15px; border-collapse: separate; border-spacing: 0; table-layout: fixed; }
.groups th, .groups td { padding: 0 0 2px 5px; border: 1px solid #9a9a9a; border-width: 0 1px 1px; font: 12px/16px "Noto Sans CJK SC", sans-serif; text-align: left; white-space: nowrap; height: 19px; }
.groups th { width: 81px; }
.groups td { background: #fff; border-left: 0; padding-left: 4px; }
.groups .ro { background: #f0f0f0; }
.groups .swatch { display: inline-block; vertical-align: middle; margin-right: 4px; }
.short { display: inline-block; width: 32px; height: 1px; background: #000; vertical-align: middle; margin-right: 4px; }

.doc { flex: 1; min-width: 0; display: flex; flex-direction: column; padding: 0 3px 3px 2px; }
.tabs { display: flex; height: 20px; padding: 1px 3px 0 2px; background: linear-gradient(#d7dbe6, #e6e9f2); }
.slope { width: 20px; height: 19px; }
.tab { display: flex; align-items: center; width: 86px; padding: 0 0 3px 2px; background: #fff; border-top: 1px solid #9aa0ac; border-right: 1px solid #9aa0ac; border-radius: 0 3px 0 0; font: bold 12px/15px "Noto Sans CJK SC", sans-serif; color: #000; }
.tab span { font: bold 11px/15px "Open Sans", sans-serif; }
.tab button { margin-left: auto; margin-right: 5px; }
.tab svg { width: 9px; height: 9px; }
.more { margin-left: auto; }
.more svg { width: 10px; height: 5px; }
.canvas { position: relative; flex: 1; min-height: 0; background: #000; border-top: 1px solid #777; border-right: 1px solid #fff; overflow: hidden; }
.drawing { position: absolute; inset: 0; width: 100%; height: 100%; pointer-events: none; }
.popup { position: absolute; left: 340px; top: 210px; width: 74px; padding: 3px 2px 2px; background: #d7d7d7; border-top: 1px solid #2970b8; display: flex; flex-direction: column; font: 12px/18px "Noto Sans CJK SC", sans-serif; color: #444; }
.popup > button { text-align: left; height: 18px; }
.popup header { display: flex; justify-content: space-between; height: 29px; padding: 3px 0 0 6px; color: #000; }
.popup header button { width: 19px; height: 19px; margin-right: -1px; background: #a84444; color: #fff; font: bold 10px/18px "Liberation Mono", monospace; }
.popup hr { width: 100%; margin: 3px 0; border: 0; border-top: 1px solid #8c8c8c; }
.sheets { display: flex; flex: none; height: 20px; background: #f0f0f0; border-bottom: 4px solid #fff; }
.nav { width: 16px; border-right: 1px solid #999; display: grid; place-items: center; background: #ececec; }
.nav svg { width: 11px; height: 11px; }
.edge { width: 8px; height: 16px; }
.sheet { padding: 0 3px; font: 10px/15px "Liberation Mono", monospace; width: 55px; text-align: center; }
.sheet.on { background: #fff; font-weight: bold; width: 40px; padding: 0; }

.command { flex: none; height: 80px; display: flex; margin-right: 3px; }
.cmdside { width: 18px; background: #c4c9d6; display: flex; flex-direction: column; align-items: center; gap: 9px; padding: 5px 4px 0 0; }
.cmdside svg { width: 9px; height: 10px; }
.cmdbody { flex: 1; min-width: 0; border: 1px solid #777; border-right: 0; border-width: 2px 0 0 1px; border-top-color: #666; background: #fff; color: #000; }
.log { display: flex; height: 57px; border-bottom: 1px solid #555; }
.lines { flex: 1; }
.lines p { margin: 0; padding-left: 1px; height: 14px; font: 14px/12px "Noto Sans CJK SC", sans-serif; }
.lines b { font-size: 12px; }
.vscroll { width: 15px; background: #f0f0f0; display: flex; flex-direction: column; align-items: center; justify-content: space-between; padding: 6px 0 4px; }
.vscroll svg { width: 9px; height: 6px; fill: none; stroke: #444; stroke-width: 2; }
.vscroll i { width: 15px; height: 17px; margin-top: 5px; background: #cdcdcd; }
.prompt { padding-left: 1px; font: bold 17px/17px "Noto Sans CJK SC", sans-serif; height: 20px; }
.prompt b { font: bold 15px/1px "Liberation Mono", monospace; }

.status { flex: none; height: 20px; display: flex; align-items: stretch; background: linear-gradient(#d8dbe2, #a9aebb 35%, #c5c9d2); font: 11px/20px "Open Sans", "Noto Sans CJK SC", sans-serif; color: #222; white-space: nowrap; }
.status > * { border-left: 1px solid #80858f; box-shadow: inset 1px 0 #e4e6ec; flex: none; }
.status .ready { flex: 1; border: 0; box-shadow: none; padding-left: 1px; font-size: 13px; }
.gap { width: 8px; }
.coord { width: 139px; padding-left: 5px; }
.gl { width: 48px; padding-left: 4px; }
.status button { width: 22px; display: grid; place-items: center; }
.status svg { width: 18px; height: 18px; }
.status .scale { width: 42px; display: flex; align-items: center; justify-content: center; gap: 2px; }
.status .lit { background: #dfe278; }
.status .model { width: 43px; }
.status .off { width: 16px; }
.resize { width: 17px; background: radial-gradient(circle, #777 1px, #0000 1px) 0 2px / 5px 5px; }
```
